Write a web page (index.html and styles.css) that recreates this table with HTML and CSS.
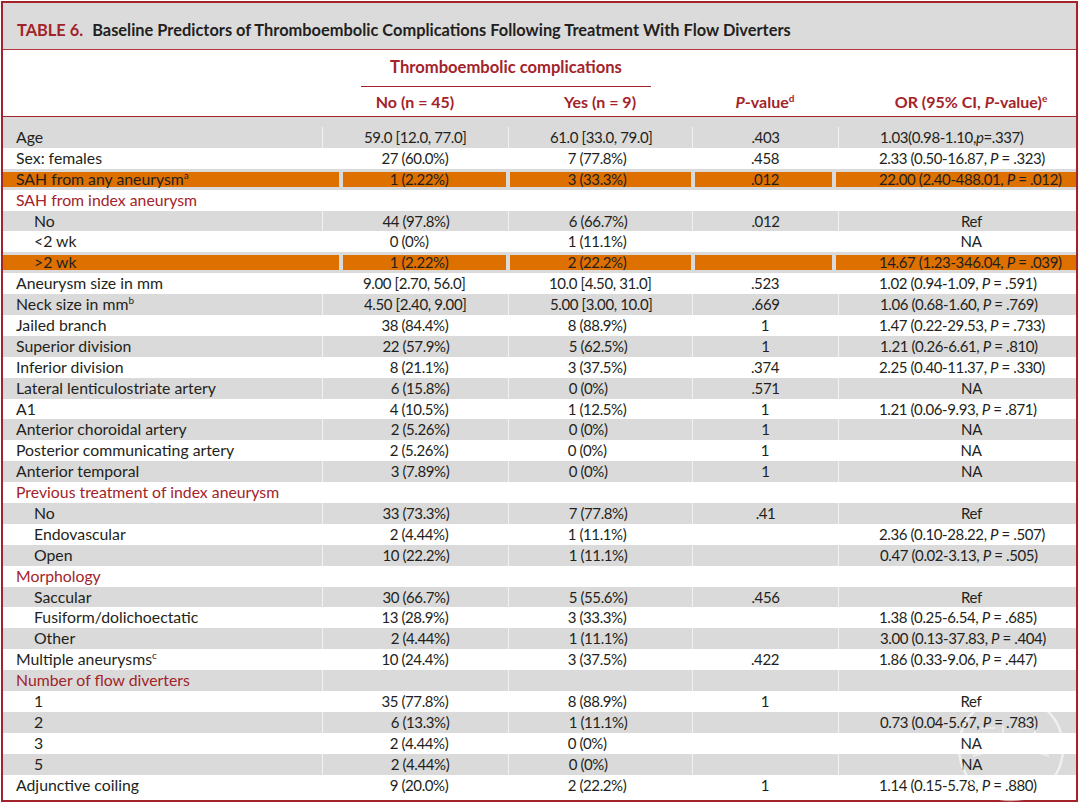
FILE: index.html
```html
<!DOCTYPE html>
<html lang="en">
<head>
<meta charset="utf-8">
<title>Table 6</title>
<link rel="stylesheet" href="styles.css">
</head>
<body>
<div class="frame">
  <div class="title"><span class="tno">TABLE 6.</span>Baseline Predictors of Thromboembolic Complications Following Treatment With Flow Diverters</div>
  <div class="head">
    <div class="hrow1"><div class="grp">Thromboembolic complications</div></div>
    <div class="hrow2">
      <div></div>
      <div class="hc">No (n = 45)</div>
      <div class="hc">Yes (n = 9)</div>
      <div class="hc"><i>P</i>-value<sup>d</sup></div>
      <div class="hc hor">OR (95% CI, <i>P</i>-value)<sup>e</sup></div>
    </div>
  </div>
  <div class="tbody">
    <div class="row first"><div class="lab">Age</div><div class="c2 rng">59.0 [12.0, 77.0]</div><div class="c3 rng">61.0 [33.0, 79.0]</div><div class="pv">.403</div><div class="or">1.03(0.98-1.10,<i>p</i>=.337)</div></div>
    <div class="row"><div class="lab">Sex: females</div><div class="c2"><span class="k">27</span> (60.0%)</div><div class="c3"><span class="k">7</span> (77.8%)</div><div class="pv">.458</div><div class="or">2.33 (0.50-16.87, <i>P</i> = .323)</div></div>
    <div class="row hl"><div class="lab">SAH from any aneurysm<sup>a</sup></div><div class="c2"><span class="k">1</span> (2.22%)</div><div class="c3"><span class="k">3</span> (33.3%)</div><div class="pv">.012</div><div class="or">22.00 (2.40-488.01, <i>P</i> = .012)</div></div>
    <div class="row"><div class="lab sec">SAH from index aneurysm</div><div class="c2"></div><div class="c3"></div><div class="pv"></div><div class="or"></div></div>
    <div class="row"><div class="lab ind">No</div><div class="c2"><span class="k">44</span> (97.8%)</div><div class="c3"><span class="k">6</span> (66.7%)</div><div class="pv">.012</div><div class="ctr">Ref</div></div>
    <div class="row"><div class="lab ind">&lt;2 wk</div><div class="c2"><span class="k">0</span> (0%)</div><div class="c3"><span class="k">1</span> (11.1%)</div><div class="pv"></div><div class="ctr">NA</div></div>
    <div class="row hl hl2"><div class="lab ind">&gt;2 wk</div><div class="c2"><span class="k">1</span> (2.22%)</div><div class="c3"><span class="k">2</span> (22.2%)</div><div class="pv"></div><div class="or">14.67 (1.23-346.04, <i>P</i> = .039)</div></div>
    <div class="row"><div class="lab">Aneurysm size in mm</div><div class="c2 rng">9.00 [2.70, 56.0]</div><div class="c3 rng">10.0 [4.50, 31.0]</div><div class="pv">.523</div><div class="or">1.02 (0.94-1.09, <i>P</i> = .591)</div></div>
    <div class="row"><div class="lab">Neck size in mm<sup>b</sup></div><div class="c2 rng">4.50 [2.40, 9.00]</div><div class="c3 rng">5.00 [3.00, 10.0]</div><div class="pv">.669</div><div class="or">1.06 (0.68-1.60, <i>P</i> = .769)</div></div>
    <div class="row"><div class="lab">Jailed branch</div><div class="c2"><span class="k">38</span> (84.4%)</div><div class="c3"><span class="k">8</span> (88.9%)</div><div class="pv">1</div><div class="or">1.47 (0.22-29.53, <i>P</i> = .733)</div></div>
    <div class="row"><div class="lab">Superior division</div><div class="c2"><span class="k">22</span> (57.9%)</div><div class="c3"><span class="k">5</span> (62.5%)</div><div class="pv">1</div><div class="or">1.21 (0.26-6.61, <i>P</i> = .810)</div></div>
    <div class="row"><div class="lab">Inferior division</div><div class="c2"><span class="k">8</span> (21.1%)</div><div class="c3"><span class="k">3</span> (37.5%)</div><div class="pv">.374</div><div class="or">2.25 (0.40-11.37, <i>P</i> = .330)</div></div>
    <div class="row"><div class="lab">Lateral lenticulostriate artery</div><div class="c2"><span class="k">6</span> (15.8%)</div><div class="c3"><span class="k">0</span> (0%)</div><div class="pv">.571</div><div class="ctr">NA</div></div>
    <div class="row"><div class="lab">A1</div><div class="c2"><span class="k">4</span> (10.5%)</div><div class="c3"><span class="k">1</span> (12.5%)</div><div class="pv">1</div><div class="or">1.21 (0.06-9.93, <i>P</i> = .871)</div></div>
    <div class="row"><div class="lab">Anterior choroidal artery</div><div class="c2"><span class="k">2</span> (5.26%)</div><div class="c3"><span class="k">0</span> (0%)</div><div class="pv">1</div><div class="ctr">NA</div></div>
    <div class="row"><div class="lab">Posterior communicating artery</div><div class="c2"><span class="k">2</span> (5.26%)</div><div class="c3"><span class="k">0</span> (0%)</div><div class="pv">1</div><div class="ctr">NA</div></div>
    <div class="row"><div class="lab">Anterior temporal</div><div class="c2"><span class="k">3</span> (7.89%)</div><div class="c3"><span class="k">0</span> (0%)</div><div class="pv">1</div><div class="ctr">NA</div></div>
    <div class="row"><div class="lab sec">Previous treatment of index aneurysm</div><div class="c2"></div><div class="c3"></div><div class="pv"></div><div class="or"></div></div>
    <div class="row"><div class="lab ind">No</div><div class="c2"><span class="k">33</span> (73.3%)</div><div class="c3"><span class="k">7</span> (77.8%)</div><div class="pv">.41</div><div class="ctr">Ref</div></div>
    <div class="row"><div class="lab ind">Endovascular</div><div class="c2"><span class="k">2</span> (4.44%)</div><div class="c3"><span class="k">1</span> (11.1%)</div><div class="pv"></div><div class="or">2.36 (0.10-28.22, <i>P</i> = .507)</div></div>
    <div class="row"><div class="lab ind">Open</div><div class="c2"><span class="k">10</span> (22.2%)</div><div class="c3"><span class="k">1</span> (11.1%)</div><div class="pv"></div><div class="or">0.47 (0.02-3.13, <i>P</i> = .505)</div></div>
    <div class="row"><div class="lab sec">Morphology</div><div class="c2"></div><div class="c3"></div><div class="pv"></div><div class="or"></div></div>
    <div class="row"><div class="lab ind">Saccular</div><div class="c2"><span class="k">30</span> (66.7%)</div><div class="c3"><span class="k">5</span> (55.6%)</div><div class="pv">.456</div><div class="ctr">Ref</div></div>
    <div class="row"><div class="lab ind">Fusiform/dolichoectatic</div><div class="c2"><span class="k">13</span> (28.9%)</div><div class="c3"><span class="k">3</span> (33.3%)</div><div class="pv"></div><div class="or">1.38 (0.25-6.54, <i>P</i> = .685)</div></div>
    <div class="row"><div class="lab ind">Other</div><div class="c2"><span class="k">2</span> (4.44%)</div><div class="c3"><span class="k">1</span> (11.1%)</div><div class="pv"></div><div class="or">3.00 (0.13-37.83, <i>P</i> = .404)</div></div>
    <div class="row"><div class="lab">Multiple aneurysms<sup>c</sup></div><div class="c2"><span class="k">10</span> (24.4%)</div><div class="c3"><span class="k">3</span> (37.5%)</div><div class="pv">.422</div><div class="or">1.86 (0.33-9.06, <i>P</i> = .447)</div></div>
    <div class="row"><div class="lab sec">Number of flow diverters</div><div class="c2"></div><div class="c3"></div><div class="pv"></div><div class="or"></div></div>
    <div class="row"><div class="lab ind">1</div><div class="c2"><span class="k">35</span> (77.8%)</div><div class="c3"><span class="k">8</span> (88.9%)</div><div class="pv">1</div><div class="ctr">Ref</div></div>
    <div class="row"><div class="lab ind">2</div><div class="c2"><span class="k">6</span> (13.3%)</div><div class="c3"><span class="k">1</span> (11.1%)</div><div class="pv"></div><div class="or">0.73 (0.04-5.67, <i>P</i> = .783)</div></div>
    <div class="row"><div class="lab ind">3</div><div class="c2"><span class="k">2</span> (4.44%)</div><div class="c3"><span class="k">0</span> (0%)</div><div class="pv"></div><div class="ctr">NA</div></div>
    <div class="row"><div class="lab ind">5</div><div class="c2"><span class="k">2</span> (4.44%)</div><div class="c3"><span class="k">0</span> (0%)</div><div class="pv"></div><div class="ctr">NA</div></div>
    <div class="row"><div class="lab">Adjunctive coiling</div><div class="c2"><span class="k">9</span> (20.0%)</div><div class="c3"><span class="k">2</span> (22.2%)</div><div class="pv">1</div><div class="or">1.14 (0.15-5.78, <i>P</i> = .880)</div></div>
  </div>
  <svg class="wm" width="120" height="120" viewBox="0 0 120 120" aria-hidden="true">
    <circle cx="60" cy="62" r="52" fill="none" stroke="#ffffff" stroke-opacity="0.6" stroke-width="2.5"/>
    <path d="M22 70 Q60 58 98 70" fill="none" stroke="#ffffff" stroke-opacity="0.45" stroke-width="2"/>
    <path d="M30 42 h14 M52 40 v14 M66 42 h12 M84 40 v12" fill="none" stroke="#ffffff" stroke-opacity="0.45" stroke-width="2"/>
  </svg>
</div>
</body>
</html>
```

FILE: styles.css
```css
html, body {
  margin: 0;
  padding: 0;
  background: #ffffff;
}

body {
  font-family: "Lato", "Liberation Sans", sans-serif;
  font-size: 15px;
  color: #231f20;
}

.frame {
  position: relative;
  margin: 1px;
  width: 1073px;
  border: 2px solid #a3232a;
  background: #ffffff;
}

.title {
  height: 47px;
  box-sizing: border-box;
  padding: 17px 0 0 14px;
  background: #dbdbdb;
  font-weight: 700;
  font-size: 16.4px;
  line-height: 20px;
  color: #231f20;
  border-bottom: 1px solid #b0383d;
  white-space: nowrap;
}

.tno {
  color: #a3232a;
  margin-right: 9px;
}

.head {
  height: 67px;
  box-sizing: border-box;
  padding-top: 7px;
  border-bottom: 1px solid #a3232a;
  color: #a3232a;
  font-weight: 700;
  font-size: 16px;
}

.hrow1,
.hrow2,
.row {
  display: grid;
  grid-template-columns: 319px 186px 184px 146px 238px;
}

.grp {
  grid-column: 2 / 4;
  margin: 0 41px 0 39px;
  text-align: center;
  font-size: 16.6px;
  line-height: 20px;
  padding-bottom: 9px;
  border-bottom: 1px solid #a3232a;
}

.hrow2 {
  margin-top: 5px;
  line-height: 20px;
}

.hc {
  text-align: center;
  white-space: nowrap;
}

.hor {
  padding-left: 28px;
}

sup {
  font-size: 10px;
  line-height: 0;
  vertical-align: 6px;
}

.tbody {
  padding-bottom: 4px;
}

.row {
  line-height: 20.9px;
  height: 20.9px;
}

.row.first {
  padding-top: 10px;
}

.row:nth-child(odd) {
  background: #dadada;
}

.row:nth-child(odd) > div + div {
  border-left: 1px solid #f2f2f2;
}

.row.hl {
  background:
    linear-gradient(to right,
      #de7000 0 336px, transparent 336px 340px,
      #de7000 340px 503px, transparent 503px 507px,
      #de7000 507px 688px, transparent 688px 692px,
      #de7000 692px 829px, transparent 829px 833px,
      #de7000 833px) 0 3px / 100% 15px no-repeat,
    #dadada;
}

.row.hl > div + div {
  border-left: 0;
}

.lab {
  padding-left: 13px;
  white-space: nowrap;
  font-size: 15.8px;
}

.lab.ind {
  padding-left: 31px;
}

.lab.sec {
  color: #a3232a;
}

.c2,
.c3,
.pv,
.or,
.ctr {
  white-space: nowrap;
  letter-spacing: -0.4px;
}

.c2 {
  padding-left: 58px;
}

.c3 {
  padding-left: 50px;
}

.c2.rng,
.c3.rng {
  padding-left: 41px;
}

.k {
  display: inline-block;
  width: 18px;
  text-align: right;
}

.pv {
  text-align: center;
}

.or {
  padding-left: 41px;
}

.ctr {
  padding-left: 28px;
  text-align: center;
}

.wm {
  position: absolute;
  left: 948px;
  top: 683px;
  pointer-events: none;
}
```
